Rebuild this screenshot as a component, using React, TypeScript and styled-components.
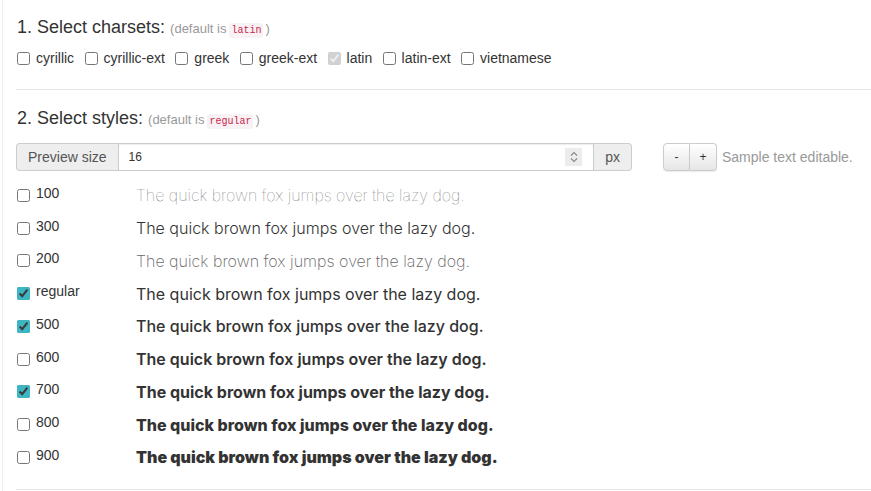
import * as React from 'react';
import styled, { createGlobalStyle } from 'styled-components';

const GlobalStyle = createGlobalStyle`
body {
    margin: 0;
    font-family: "Liberation Sans", Arial, sans-serif;
    color: #333;
    background: #fff;
}
`

const Page = styled.div`
border-left: 1px solid #eee;
margin-left: 2px;
padding: 16px 0 0 13px;
height: 491px;
box-sizing: border-box;
`

const Section = styled.section<{ $pad: number }>`
padding-bottom: ${p => p.$pad}px;
border-bottom: 1px solid #e8e8e8;
margin-bottom: 17px;
`

const Heading = styled.h3`
margin: 0 0 0 1px;
font-size: 18px;
font-weight: 400;
line-height: 22px;
`

const Hint = styled.small`
font-size: 13px;
color: #999;
`

const Code = styled.code`
font-family: "Liberation Mono", monospace;
font-size: 10px;
color: #c7254e;
background: #f9f2f4;
border-radius: 3px;
padding: 2px;
margin: 0 2px 0 3px;
`

const CharsetRow = styled.div`
display: flex;
align-items: center;
margin-top: 8px;
`

const CharsetLabel = styled.label`
display: flex;
align-items: center;
font-size: 14px;
margin-right: 9.4px;
`

const Check = styled.input.attrs({ type: 'checkbox' })`
width: 13px;
height: 13px;
margin: 0 6px 0 1px;
accent-color: #3db5c2;
`

const Toolbar = styled.div`
display: flex;
align-items: center;
margin: 10px 0 8px 0;
`

const InputGroup = styled.div`
display: flex;
width: 616px;
height: 28px;
`

const Addon = styled.span<{ $side: 'left' | 'right' }>`
display: flex;
align-items: center;
padding: 0 11px;
font-size: 14px;
color: #555;
background: #eee;
border: 1px solid #ccc;
border-radius: ${p => (p.$side === 'left' ? '4px 0 0 4px' : '0 4px 4px 0')};
${p => (p.$side === 'left' ? 'border-right: 0;' : 'border-left: 0;')}
`

const Field = styled.div`
flex: 1;
display: flex;
align-items: center;
border: 1px solid #ccc;
box-shadow: inset 0 1px 1px rgba(0, 0, 0, 0.075);
padding-right: 11px;
`

const SizeInput = styled.input`
flex: 1;
min-width: 0;
border: 0;
background: transparent;
padding: 0 10px;
font-family: "Liberation Sans", Arial, sans-serif;
font-size: 12px;
color: #333;
outline: none;
-moz-appearance: textfield;
&::-webkit-inner-spin-button,
&::-webkit-outer-spin-button {
    -webkit-appearance: none;
    margin: 0;
}
`

const Spinner = styled.span`
display: flex;
align-items: center;
justify-content: center;
width: 17px;
height: 18px;
background: #ececec;
`

const BtnGroup = styled.div`
display: flex;
margin-left: 31px;
height: 28px;
`

const StepButton = styled.button<{ $first?: boolean }>`
width: 27px;
font-size: 12px;
color: #333;
background: linear-gradient(#fff, #e6e6e6);
border: 1px solid #ccc;
border-radius: ${p => (p.$first ? '4px 0 0 4px' : '0 4px 4px 0')};
${p => (p.$first ? '' : 'border-left: 0;')}
box-shadow: 0 1px 1px rgba(0, 0, 0, 0.08);
padding: 0;
`

const Editable = styled.span`
font-size: 14px;
color: #999;
margin-left: 5px;
`

const StyleRow = styled.div`
display: grid;
grid-template-columns: 120px 1fr;
align-items: center;
height: 32.75px;
`

const StyleLabel = styled.label`
display: flex;
align-items: center;
font-size: 14px;
`

const LabelText = styled.span`
padding-bottom: 5px;
`

const Sample = styled.div<{ $weight: number }>`
font-family: Inter, "Noto Sans", sans-serif;
font-size: 16px;
font-weight: ${p => p.$weight};
color: ${p => (p.$weight <= 200 ? '#666' : '#333')};
`

const charsets = ['cyrillic', 'cyrillic-ext', 'greek', 'greek-ext', 'latin', 'latin-ext', 'vietnamese'];

const styles: { name: string; weight: number; checked: boolean }[] = [
    { name: '100', weight: 100, checked: false },
    { name: '300', weight: 300, checked: false },
    { name: '200', weight: 200, checked: false },
    { name: 'regular', weight: 400, checked: true },
    { name: '500', weight: 500, checked: true },
    { name: '600', weight: 600, checked: false },
    { name: '700', weight: 700, checked: true },
    { name: '800', weight: 800, checked: false },
    { name: '900', weight: 900, checked: false },
];

const App: React.FC = () => {
    return (
        <Page>
            <GlobalStyle />
            <Section $pad={23}>
                <Heading>
                    1. Select charsets: <Hint>(default is<Code>latin</Code>)</Hint>
                </Heading>
                <CharsetRow>
                    {charsets.map(c => (
                        <CharsetLabel key={c}>
                            <Check defaultChecked={c === 'latin'} disabled={c === 'latin'} />
                            {c}
                        </CharsetLabel>
                    ))}
                </CharsetRow>
            </Section>

            <Section $pad={15}>
                <Heading>
                    2. Select styles: <Hint>(default is<Code>regular</Code>)</Hint>
                </Heading>
                <Toolbar>
                    <InputGroup>
                        <Addon $side="left">Preview size</Addon>
                        <Field>
                            <SizeInput type="number" defaultValue={16} />
                            <Spinner>
                                <svg width="8" height="14" viewBox="0 0 8 14" fill="none" stroke="#888" strokeWidth="1.1">
                                    <path d="M1 5.5 L4 2.5 L7 5.5" />
                                    <path d="M1 8.5 L4 11.5 L7 8.5" />
                                </svg>
                            </Spinner>
                        </Field>
                        <Addon $side="right">px</Addon>
                    </InputGroup>
                    <BtnGroup>
                        <StepButton $first>-</StepButton>
                        <StepButton>+</StepButton>
                    </BtnGroup>
                    <Editable>Sample text editable.</Editable>
                </Toolbar>
                {styles.map(s => (
                    <StyleRow key={s.name}>
                        <StyleLabel>
                            <Check defaultChecked={s.checked} />
                            <LabelText>{s.name}</LabelText>
                        </StyleLabel>
                        <Sample $weight={s.weight}>The quick brown fox jumps over the lazy dog.</Sample>
                    </StyleRow>
                ))}
            </Section>
        </Page>
    );
}

export default App;
